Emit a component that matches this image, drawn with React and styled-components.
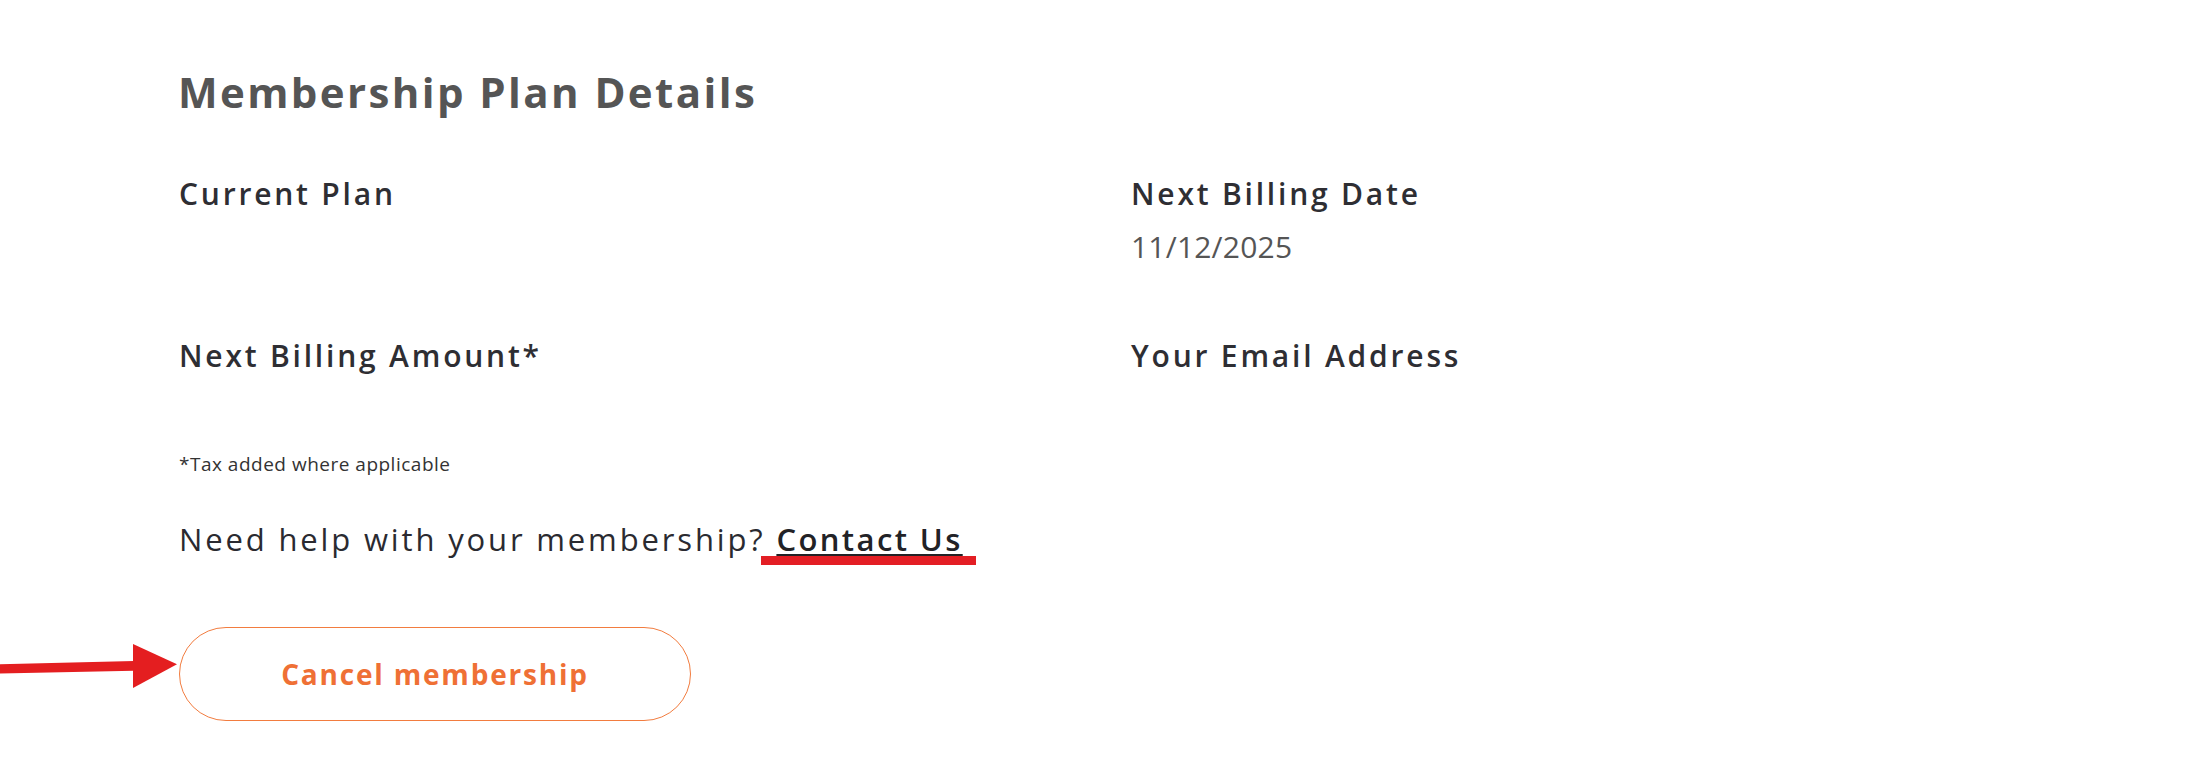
import React from "react";
import styled, { createGlobalStyle } from "styled-components";

const GlobalStyle = createGlobalStyle`
  html, body {
    margin: 0;
    padding: 0;
    background: #fff;
    font-family: "Open Sans", "Liberation Sans", sans-serif;
  }
`;

const fields = [
  { label: "Current Plan", value: "" },
  { label: "Next Billing Date", value: "11/12/2025" },
  { label: "Next Billing Amount*", value: "" },
  { label: "Your Email Address", value: "" },
];

export default function App() {
  return (
    <>
      <GlobalStyle />
      <Page>
        <Title>Membership Plan Details</Title>
        <FieldsGrid>
          {fields.map((f) => (
            <Field key={f.label}>
              <Label>{f.label}</Label>
              <Value>{f.value}</Value>
            </Field>
          ))}
        </FieldsGrid>
        <TaxNote>*Tax added where applicable</TaxNote>
        <HelpLine>
          Need help with your membership?{" "}
          <ContactLink href="#">
            Contact Us
            <Highlight />
          </ContactLink>
        </HelpLine>
        <CancelButton>Cancel membership</CancelButton>
        <Arrow width="180" height="50" viewBox="0 0 180 50">
          <polygon points="0,24.3 134,21 134,30.7 0,33.5" fill="#e41e20" />
          <polygon points="133,4 177,24.3 133,48" fill="#e41e20" />
        </Arrow>
      </Page>
    </>
  );
}

const Page = styled.div`
  position: relative;
  padding: 67px 0 60px 179px;
`;

const Title = styled.h1`
  margin: 0 0 0 -1px;
  font-size: 42px;
  line-height: 50px;
  font-weight: 700;
  letter-spacing: 2.4px;
  color: #555555;
`;

const FieldsGrid = styled.div`
  display: grid;
  grid-template-columns: 952px 1fr;
  row-gap: 73px;
  margin-top: 59px;
`;

const Field = styled.div`
  display: flex;
  flex-direction: column;
`;

const Label = styled.div`
  font-size: 30px;
  line-height: 36px;
  font-weight: 600;
  letter-spacing: 2.8px;
  color: #2e2e33;
`;

const Value = styled.div`
  margin-top: 17px;
  min-height: 36px;
  font-size: 30px;
  line-height: 36px;
  font-weight: 400;
  letter-spacing: 0.2px;
  color: #555555;
`;

const TaxNote = styled.p`
  margin: 25px 0 0;
  font-size: 19px;
  line-height: 24px;
  letter-spacing: 0.5px;
  color: #333333;
`;

const HelpLine = styled.p`
  margin: 43px 0 0;
  font-size: 31px;
  line-height: 40px;
  letter-spacing: 2.85px;
  color: #2a2a30;
`;

const ContactLink = styled.a`
  position: relative;
  display: inline-block;
  font-weight: 600;
  letter-spacing: 2.4px;
  color: #222226;
  text-decoration: underline;
  text-decoration-thickness: 3px;
  text-underline-offset: 3px;
`;

const Highlight = styled.span`
  position: absolute;
  left: -15px;
  top: 37px;
  width: 215px;
  height: 9px;
  background: #e31e24;
`;

const CancelButton = styled.button`
  display: flex;
  align-items: center;
  justify-content: center;
  margin-top: 68px;
  width: 512px;
  height: 94px;
  padding: 0;
  border: 1px solid #f27c3f;
  border-radius: 47px;
  background: #fff;
  font-family: inherit;
  font-size: 28px;
  font-weight: 700;
  letter-spacing: 1.8px;
  color: #ef7035;
  cursor: pointer;
`;

const Arrow = styled.svg`
  position: absolute;
  left: 0;
  top: 640px;
`;
